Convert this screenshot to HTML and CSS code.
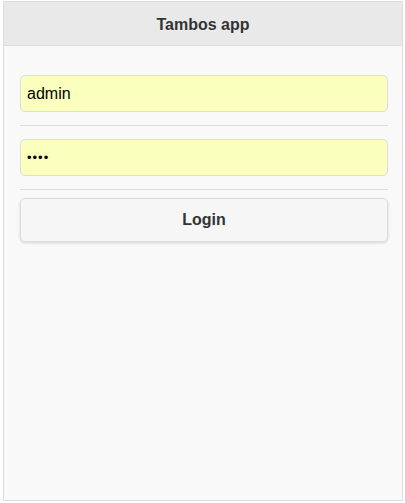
FILE: index.html
```html
<!DOCTYPE html>
<html>
<head>
<meta charset="utf-8">
<link rel="stylesheet" href="styles.css">
</head>
<body>
<div class="page">
  <header class="header"><h1 class="title">Tambos app</h1></header>
  <main class="content">
    <div class="field">
      <input class="input" type="text" value="admin">
    </div>
    <div class="field">
      <input class="input" type="password" value="1234">
    </div>
    <button class="btn" type="button">Login</button>
  </main>
</div>
</body>
</html>
```
FILE: styles.css
```css
html, body {
  margin: 0;
  padding: 0;
  background: #ffffff;
  font-family: "Liberation Sans", Arial, sans-serif;
}
body {
  padding: 1px 2px 2px 3px;
  height: 503px;
  box-sizing: border-box;
}
.page {
  height: 100%;
  box-sizing: border-box;
  border: 1px solid #dddddd;
  background: #f9f9f9;
  display: flex;
  flex-direction: column;
}
.header {
  background: #e9e9e9;
  border-bottom: 1px solid #dddddd;
  height: 43px;
  box-sizing: border-box;
  padding-top: 2px;
  height: 44px;
  display: flex;
  align-items: center;
  justify-content: center;
}
.title {
  margin: 0;
  font-size: 16px;
  font-weight: bold;
  color: #333333;
  text-shadow: 0 1px 0 #eeeeee;
}
.content {
  padding: 29px 14px 0 16px;
  display: flex;
  flex-direction: column;
}
.field {
  padding-bottom: 13px;
  margin-bottom: 13px;
  border-bottom: 1px solid #dddddd;
}
.input {
  display: block;
  width: 100%;
  box-sizing: border-box;
  height: 37px;
  margin: 0;
  padding: 0 6px;
  border: 1px solid #dddddd;
  border-radius: 5px;
  background: #faffbd;
  font-family: "Liberation Sans", Arial, sans-serif;
  font-size: 16px;
  color: #000000;
  outline: none;
}
.input[type="password"] {
  font-size: 13px;
  letter-spacing: 1px;
}
.btn {
  margin: -5px 0 0 0;
  height: 44px;
  width: 100%;
  box-sizing: border-box;
  border: 1px solid #dddddd;
  border-radius: 5px;
  background: #f6f6f6;
  box-shadow: 0 1px 3px rgba(0,0,0,0.15);
  font-family: "Liberation Sans", Arial, sans-serif;
  font-size: 16px;
  font-weight: bold;
  color: #333333;
  text-shadow: 0 1px 0 #f3f3f3;
}
```
